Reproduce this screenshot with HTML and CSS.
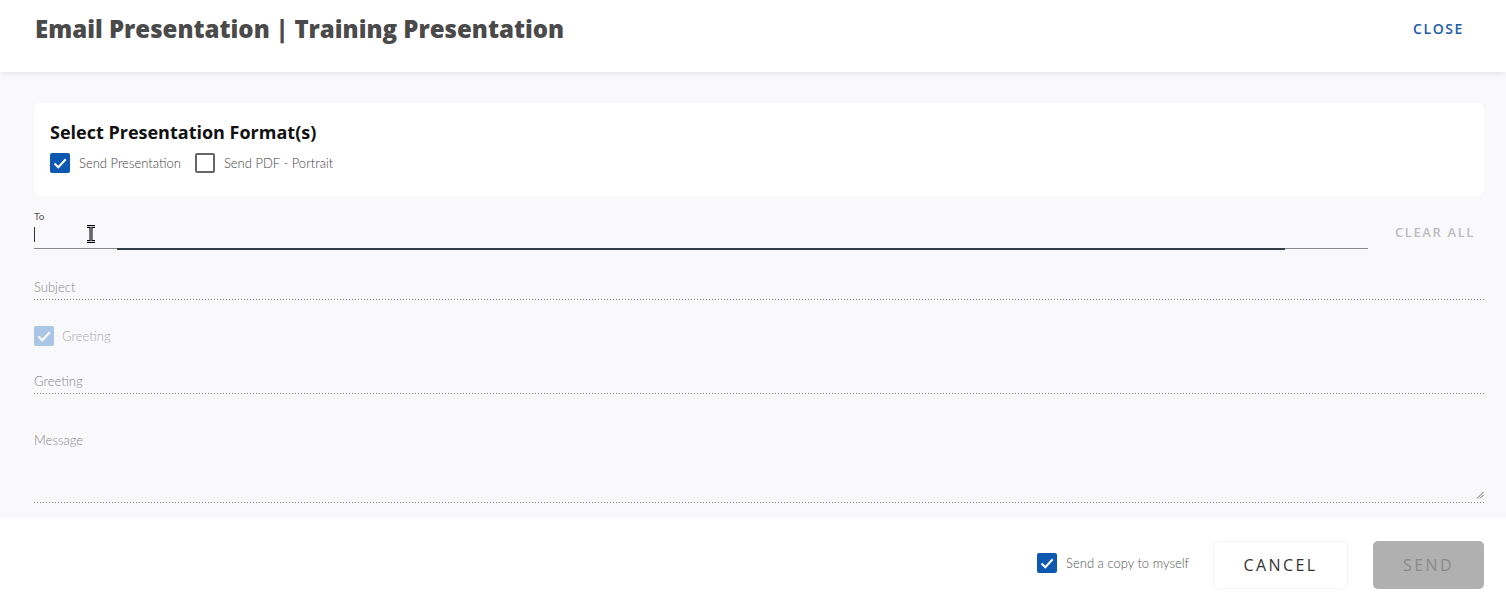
FILE: index.html
```html
<!DOCTYPE html>
<html>
  <head>
    <title>Email Presentation</title>
    <link rel="stylesheet" href="styles.css">
  </head>
  <body>
    <div class="header">
      <h1>Email Presentation | Training Presentation</h1>
      <a class="close-link" href="#">CLOSE</a>
    </div>

    <div class="content">
      <div class="card">
        <h2>Select Presentation Format(s)</h2>
        <div class="format-row">
          <label class="check">
            <span class="box checked">
              <svg viewBox="0 0 20 20" width="20" height="20"><path d="M4.5 10.5l3.8 3.8 7.4-8" fill="none" stroke="#fff" stroke-width="2"/></svg>
            </span>
            Send Presentation
          </label>
          <label class="check">
            <span class="box"></span>
            Send PDF - Portrait
          </label>
        </div>
      </div>

      <div class="to-row">
        <div class="to-field">
          <div class="small-label">To</div>
          <div class="to-input">
            <span class="caret"></span>
            <svg class="ibeam" viewBox="0 0 12 18" width="12" height="18"><path d="M2 1.5h8M6 1.5v15M2 16.5h8" fill="none" stroke="#000" stroke-width="3"/><path d="M2 1.5h8M6 1.5v15M2 16.5h8" fill="none" stroke="#ccc" stroke-width="1"/></svg>
          </div>
          <div class="underline"><span class="focus-bar"></span></div>
        </div>
        <a class="clear-all" href="#">CLEAR ALL</a>
      </div>

      <div class="field">
        <div class="field-label">Subject</div>
      </div>

      <label class="check greeting-check">
        <span class="box checked faded">
          <svg viewBox="0 0 20 20" width="20" height="20"><path d="M4.5 10.5l3.8 3.8 7.4-8" fill="none" stroke="#fff" stroke-width="2"/></svg>
        </span>
        Greeting
      </label>

      <div class="field">
        <div class="field-label">Greeting</div>
      </div>

      <div class="field message">
        <div class="field-label">Message</div>
        <svg class="grip" viewBox="0 0 8 8" width="8" height="8"><path d="M1 7.5L7.5 1M4 7.5L7.5 4" stroke="#666" stroke-width="1"/></svg>
      </div>
    </div>

    <div class="footer">
      <label class="check">
        <span class="box checked">
          <svg viewBox="0 0 20 20" width="20" height="20"><path d="M4.5 10.5l3.8 3.8 7.4-8" fill="none" stroke="#fff" stroke-width="2"/></svg>
        </span>
        Send a copy to myself
      </label>
      <button class="btn cancel">CANCEL</button>
      <button class="btn send" disabled>SEND</button>
    </div>
  </body>
</html>
```

FILE: styles.css
```css
body {
  margin: 0;
  font-family: "Open Sans", Arial, sans-serif;
  background-color: #fff;
  height: 600px;
  overflow: hidden;
}

.header {
  height: 72px;
  display: flex;
  align-items: center;
  justify-content: space-between;
  padding: 0 42px 0 35px;
  background-color: #fff;
  box-shadow: 0 2px 6px rgba(0, 0, 0, 0.08);
  position: relative;
  z-index: 2;
}
.header h1 {
  margin: 0;
  font-size: 24px;
  font-weight: 800;
  color: #4a4a4a;
  margin-top: -16px;
}
.close-link {
  font-size: 14px;
  font-weight: 600;
  letter-spacing: 1.6px;
  color: #1a5ba6;
  text-decoration: none;
  margin-top: -15px;
}

.content {
  background-color: #f9f9fb;
  height: 446px;
  padding: 31px 22px 0 34px;
  box-sizing: border-box;
}

.card {
  background-color: #fff;
  border-radius: 6px;
  height: 93px;
  padding: 17px 16px 0 16px;
  box-sizing: border-box;
}
.card h2 {
  margin: 0;
  font-size: 18px;
  font-weight: 700;
  color: #111;
  line-height: 24px;
}
.format-row {
  display: flex;
  gap: 14px;
  margin-top: 9px;
}

.check {
  display: flex;
  align-items: center;
  gap: 9px;
  font-family: Lato, "Noto Sans", sans-serif;
  font-weight: 300;
  font-size: 13px;
  color: #444;
}
.box {
  width: 20px;
  height: 20px;
  box-sizing: border-box;
  border: 2px solid #666;
  border-radius: 2px;
  display: flex;
}
.box.checked {
  border: none;
  background-color: #0d58b1;
}
.box.faded {
  background-color: #a9c6e7;
}

.to-row {
  display: flex;
  align-items: flex-end;
  margin-top: 14px;
}
.to-field {
  width: 1334px;
}
.small-label {
  font-family: Lato, "Noto Sans", sans-serif;
  font-size: 10px;
  color: #555;
  height: 12px;
}
.to-input {
  height: 26px;
  position: relative;
}
.caret {
  position: absolute;
  left: 0;
  top: 5px;
  width: 1px;
  height: 15px;
  background-color: #333;
}
.ibeam {
  position: absolute;
  left: 51px;
  top: 3px;
}
.underline {
  height: 1px;
  background-color: #8a8a8a;
  position: relative;
}
.focus-bar {
  position: absolute;
  left: 83px;
  width: 1168px;
  top: 0;
  height: 2px;
  background-color: #333f48;
}
.clear-all {
  font-size: 13px;
  font-weight: 600;
  letter-spacing: 1.6px;
  color: #bdbdbd;
  text-decoration: none;
  margin-left: 27px;
  margin-bottom: 8px;
}

.field {
  background-image: linear-gradient(to right, #888 1px, transparent 1px);
  background-size: 3px 1px;
  background-repeat: repeat-x;
  background-position: left bottom;
  margin-top: 30px;
  height: 21px;
  position: relative;
}
.field-label {
  font-family: Lato, "Noto Sans", sans-serif;
  font-weight: 300;
  font-size: 13px;
  color: #888;
}
.greeting-check {
  margin-top: 26px;
  gap: 8px;
  color: #aaa;
}
.greeting-check + .field {
  margin-top: 27px;
}
.field.message {
  margin-top: 38px;
  height: 71px;
}
.grip {
  position: absolute;
  right: 0;
  bottom: 4px;
}

.footer {
  height: 82px;
  display: flex;
  align-items: center;
  justify-content: flex-end;
  padding: 12px 22px 0 0;
  background-color: #fff;
  box-sizing: border-box;
}
.footer .check {
  margin-right: 24px;
  margin-top: -4px;
  color: #555;
}
.btn {
  height: 48px;
  font-family: "Open Sans", Arial, sans-serif;
  font-size: 16px;
  letter-spacing: 2.4px;
  border-radius: 5px;
}
.cancel {
  width: 135px;
  background-color: #fff;
  border: 1px solid #f4f4f6;
  color: #333;
  margin-right: 25px;
}
.send {
  width: 111px;
  border: none;
  background-color: #b0b0b0;
  color: #8a8a8a;
}
```
